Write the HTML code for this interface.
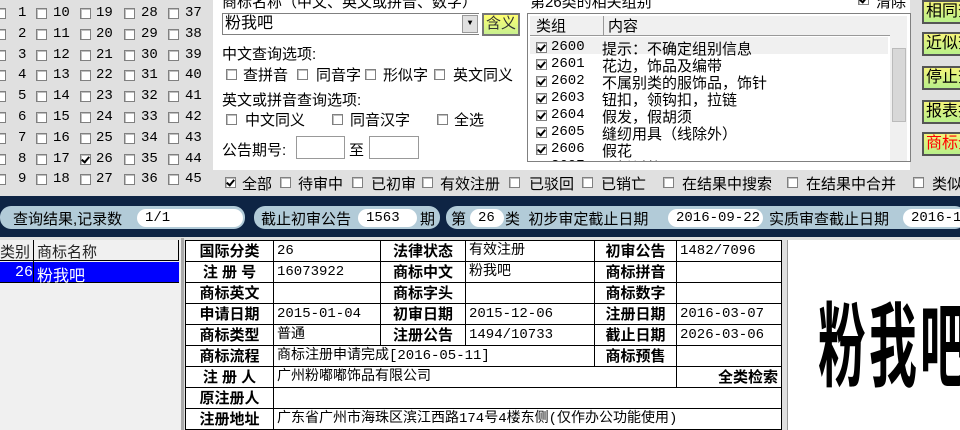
<!DOCTYPE html>
<html><head><meta charset="utf-8"><style>
*{margin:0;padding:0;box-sizing:border-box}
body{width:960px;height:430px;overflow:hidden;background:#e0e0e0;font-family:"Liberation Mono","WenQuanYi Zen Hei",monospace;font-size:14px;color:#000;position:relative}
.a{position:absolute;white-space:nowrap}
.cb{position:absolute;width:11px;height:11px;border:1px solid #808080;background:#fff;box-shadow:inset 1px 1px 0 #c0c0c0}
.cb.k::after{content:"";position:absolute;left:2px;top:0px;width:3px;height:6px;border:solid #000;border-width:0 2px 2px 0;transform:rotate(40deg)}
.t{font-family:"Liberation Sans","WenQuanYi Zen Hei",sans-serif}
.btn{position:absolute;left:922px;width:40px;height:24px;border:2px solid #555;background:linear-gradient(#f4f47a,#b8f08a);font-size:16px;line-height:20px;padding-left:2px;font-family:"Liberation Sans","WenQuanYi Zen Hei",sans-serif;white-space:nowrap;overflow:hidden}
.pill{position:absolute;top:206px;height:23px;background:#b2cbd8;border-radius:11px}
.pv{position:absolute;top:209px;height:18px;background:#fff;border-radius:9px;font-size:14px;line-height:18px;padding-left:8px}
table{border-collapse:collapse;position:absolute;left:185px;top:240px}
td{border:1px solid #000;height:21px;padding:0 3px;font-size:14px;line-height:19px;background:#fff;overflow:hidden;white-space:nowrap}
td.h{font-weight:bold;text-align:center;font-size:15px;font-family:"Liberation Sans","Noto Sans CJK SC",sans-serif}
</style></head><body>
<div class="a" style="left:213px;top:0;width:697px;height:170px;background:#fff"></div>
<div class="a t" style="left:222px;top:-9px;font-size:15px">商标名称（中文、英文或拼音、数字）</div>
<div class="a t" style="left:222px;top:13px;width:257px;height:22px;border:1px solid #808080;border-right:none;background:#fff;font-size:16px;line-height:20px;padding-left:2px">粉我吧</div>
<div class="a" style="left:462px;top:15px;width:16px;height:18px;background:#e0e0e0;border:1px solid #999;font-size:8px;text-align:center;line-height:16px">▼</div>
<div class="a" style="left:482px;top:13px;width:38px;height:23px;border:2px solid #777;background:linear-gradient(#ffff70,#c8f090);font-size:15px;line-height:19px;text-align:center;color:#333">含义</div>
<div class="a t" style="left:222px;top:43px;font-size:15px">中文查询选项:</div>
<div class="cb" style="left:226px;top:69px"></div><div class="a t" style="left:243px;top:64px;font-size:15px">查拼音</div>
<div class="cb" style="left:297px;top:69px"></div><div class="a t" style="left:316px;top:64px;font-size:15px">同音字</div>
<div class="cb" style="left:365px;top:69px"></div><div class="a t" style="left:383px;top:64px;font-size:15px">形似字</div>
<div class="cb" style="left:434px;top:69px"></div><div class="a t" style="left:453px;top:64px;font-size:15px">英文同义</div>
<div class="a t" style="left:222px;top:89px;font-size:15px">英文或拼音查询选项:</div>
<div class="cb" style="left:226px;top:114px"></div><div class="a t" style="left:245px;top:109px;font-size:15px">中文同义</div>
<div class="cb" style="left:332px;top:114px"></div><div class="a t" style="left:350px;top:109px;font-size:15px">同音汉字</div>
<div class="cb" style="left:437px;top:114px"></div><div class="a t" style="left:454px;top:109px;font-size:15px">全选</div>
<div class="a t" style="left:222px;top:139px;font-size:15px">公告期号:</div>
<div class="a" style="left:296px;top:136px;width:49px;height:23px;border:1px solid #999;background:#fff"></div>
<div class="a t" style="left:349px;top:139px;font-size:15px">至</div>
<div class="a" style="left:369px;top:136px;width:50px;height:23px;border:1px solid #999;background:#fff"></div>

<div id="cls"></div>
<script>
var h="",xs=[[0,18],[36,53],[80,96],[124,141],[168,185]];
for(var c=0;c<5;c++)for(var r=0;r<9;r++){var n=c*9+r+1,y=8+r*20.8;
h+='<div class="cb'+(n==26?' k':'')+'" style="left:'+(xs[c][0]+(c==0?-5:0))+'px;top:'+(y)+'px"></div><div class="a" style="left:'+xs[c][1]+'px;top:'+(y-3)+'px;font-size:14px">'+n+'</div>';}
document.getElementById('cls').innerHTML=h;
</script>

<div class="cb k" style="left:225px;top:177px"></div><div class="a t" style="left:242px;top:173px;font-size:15px">全部</div>
<div class="cb" style="left:280px;top:177px"></div><div class="a t" style="left:298px;top:173px;font-size:15px">待审中</div>
<div class="cb" style="left:352px;top:177px"></div><div class="a t" style="left:371px;top:173px;font-size:15px">已初审</div>
<div class="cb" style="left:422px;top:177px"></div><div class="a t" style="left:440px;top:173px;font-size:15px">有效注册</div>
<div class="cb" style="left:509px;top:177px"></div><div class="a t" style="left:529px;top:173px;font-size:15px">已驳回</div>
<div class="cb" style="left:582px;top:177px"></div><div class="a t" style="left:601px;top:173px;font-size:15px">已销亡</div>
<div class="cb" style="left:663px;top:177px"></div><div class="a t" style="left:682px;top:173px;font-size:15px">在结果中搜索</div>
<div class="cb" style="left:787px;top:177px"></div><div class="a t" style="left:806px;top:173px;font-size:15px">在结果中合并</div>
<div class="cb" style="left:913px;top:177px"></div><div class="a t" style="left:932px;top:173px;font-size:15px">类似</div>

<div class="a t" style="left:530px;top:-9px;font-size:15px">第26类的相关组别</div>
<div class="cb k" style="left:858px;top:-6px"></div><div class="a t" style="left:876px;top:-9px;font-size:15px">清除</div>
<div class="a" style="left:527px;top:13px;width:384px;height:149px;border:1px solid #808080;background:#fff;overflow:hidden">
 <div class="a" style="left:2px;top:2px;width:360px;height:20px;background:#f0f0f0;border-bottom:1px solid #999"></div>
 <div class="a" style="left:75px;top:2px;width:1px;height:20px;background:#999"></div>
 <div class="a t" style="left:8px;top:1px;font-size:15px">类组</div>
 <div class="a t" style="left:80px;top:1px;font-size:15px">内容</div>
 <div class="a" style="left:2px;top:23px;width:358px;height:17px;background:#f0f0f0"></div>
 <div class="a" style="left:362px;top:2px;width:17px;height:145px;background:#f0f0f0"></div>
 <div class="a" style="left:364px;top:34px;width:14px;height:74px;background:#d8d8d8;border:1px solid #bbb"></div>
 <div id="grp"></div>
</div>
<script>
var g=[["2600","提示：不确定组别信息"],["2601","花边，饰品及编带"],["2602","不属别类的服饰品，饰针"],["2603","钮扣，领钩扣，拉链"],["2604","假发，假胡须"],["2605","缝纫用具（线除外）"],["2606","假花"],["2607","硬托衬垫"]],s="";
for(var i=0;i<g.length;i++){var y=25+i*17;s+='<div class="cb k" style="left:8px;top:'+(y+3)+'px"></div><div class="a" style="left:23px;top:'+y+'px;font-size:14px">'+g[i][0]+'</div><div class="a t" style="left:74px;top:'+(y-1)+'px;font-size:15px">'+g[i][1]+'</div>';}
document.getElementById('grp').innerHTML=s;
</script>

<div class="btn" style="top:0">相同查询</div>
<div class="btn" style="top:32px">近似查询</div>
<div class="btn" style="top:66px">停止查询</div>
<div class="btn" style="top:100px">报表打印</div>
<div class="btn" style="top:132px;color:#f00">商标全类</div>

<div class="a" style="left:0;top:196px;width:960px;height:41px;background:#0e2444"></div>
<div class="pill" style="left:0;width:245px"></div>
<div class="a t" style="left:13px;top:208px;font-size:15px">查询结果,记录数</div>
<div class="pv" style="left:137px;width:106px">1/1</div>
<div class="pill" style="left:254px;width:186px"></div>
<div class="a t" style="left:261px;top:208px;font-size:15px">截止初审公告</div>
<div class="pv" style="left:358px;width:59px">1563</div>
<div class="a t" style="left:420px;top:208px;font-size:15px">期</div>
<div class="pill" style="left:446px;width:520px"></div>
<div class="a t" style="left:451px;top:208px;font-size:15px">第</div>
<div class="pv" style="left:470px;width:34px">26</div>
<div class="a t" style="left:505px;top:208px;font-size:15px">类&nbsp;&nbsp;初步审定截止日期</div>
<div class="pv" style="left:668px;width:95px">2016-09-22</div>
<div class="a t" style="left:769px;top:208px;font-size:15px">实质审查截止日期</div>
<div class="pv" style="left:903px;width:70px">2016-1</div>

<div class="a" style="left:0;top:240px;width:184px;height:190px;background:#f0f0f0"></div>
<div class="a" style="left:0;top:240px;width:179px;height:21px;border-bottom:1px solid #000;border-right:1px solid #000"></div>
<div class="a" style="left:33px;top:240px;width:1px;height:42px;background:#000"></div>
<div class="a t" style="left:0;top:241px;font-size:15px;color:#222">类别</div>
<div class="a t" style="left:37px;top:241px;font-size:15px;color:#222">商标名称</div>
<div class="a" style="left:0;top:262px;width:179px;height:21px;background:#0000ff;border-bottom:1px solid #000"></div>
<div class="a" style="left:33px;top:262px;width:1px;height:20px;background:#000"></div>
<div class="a" style="left:15px;top:264px;color:#fff;font-size:15px">26</div>
<div class="a t" style="left:37px;top:262px;color:#fff;font-size:16px">粉我吧</div>
<div class="a" style="left:181px;top:238px;width:3px;height:192px;background:#aaa"></div>

<table>
<colgroup><col style="width:88px"><col style="width:107px"><col style="width:85px"><col style="width:129px"><col style="width:82px"><col style="width:105px"></colgroup>
<tr><td class="h">国际分类</td><td>26</td><td class="h">法律状态</td><td>有效注册</td><td class="h">初审公告</td><td>1482/7096</td></tr>
<tr><td class="h">注&nbsp;册&nbsp;号</td><td>16073922</td><td class="h">商标中文</td><td>粉我吧</td><td class="h">商标拼音</td><td></td></tr>
<tr><td class="h">商标英文</td><td></td><td class="h">商标字头</td><td></td><td class="h">商标数字</td><td></td></tr>
<tr><td class="h">申请日期</td><td>2015-01-04</td><td class="h">初审日期</td><td>2015-12-06</td><td class="h">注册日期</td><td>2016-03-07</td></tr>
<tr><td class="h">商标类型</td><td>普通</td><td class="h">注册公告</td><td>1494/10733</td><td class="h">截止日期</td><td>2026-03-06</td></tr>
<tr><td class="h">商标流程</td><td colspan="3">商标注册申请完成[2016-05-11]</td><td class="h">商标预售</td><td></td></tr>
<tr><td class="h">注&nbsp;册&nbsp;人</td><td colspan="4">广州粉嘟嘟饰品有限公司</td><td class="h" style="text-align:right">全类检索</td></tr>
<tr><td class="h">原注册人</td><td colspan="5"></td></tr>
<tr><td class="h">注册地址</td><td colspan="5">广东省广州市海珠区滨江西路174号4楼东侧(仅作办公功能使用)</td></tr>
</table>

<div class="a" style="left:787px;top:240px;width:173px;height:190px;background:#fff;border-left:1px solid #999;overflow:hidden">
<div class="a" style="left:30px;top:50px;font-size:92px;font-weight:bold;font-family:'Noto Sans CJK SC',sans-serif;transform:scaleX(0.52);transform-origin:left top;letter-spacing:6px;line-height:100px">粉我吧</div>
</div>
</body></html>
